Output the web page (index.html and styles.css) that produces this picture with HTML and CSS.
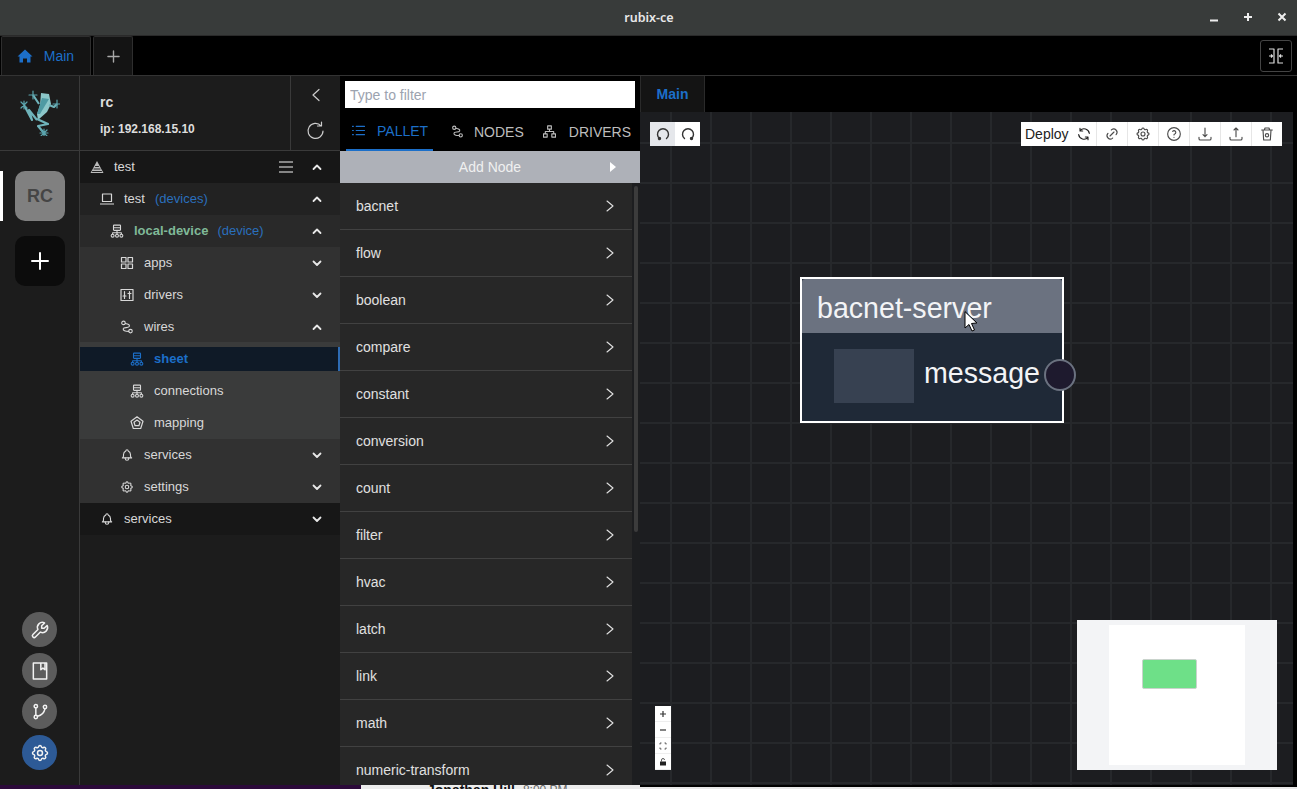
FILE: index.html
```html
<!DOCTYPE html>
<html lang="en">
<head>
    <meta charset="UTF-8">
    <title>rubix-ce</title>
    <link rel="stylesheet" href="styles.css">
</head>

<body>
    <!-- Shared icons -->
    <svg class="icon-defs" xmlns="http://www.w3.org/2000/svg">
        <symbol id="i-hierarchy" viewBox="0 0 24 24"><rect x="6" y="2" width="12" height="9" rx="1"/><path d="M6 6.500h12M12 11v4M4.500 15h15M4.500 15v2M12 15v2M19.500 15v2"/><circle cx="4.500" cy="20" r="2.500"/><circle cx="12" cy="20" r="2.500"/><circle cx="19.500" cy="20" r="2.500"/></symbol>
        <symbol id="i-route" viewBox="0 0 24 24"><circle cx="6" cy="5" r="3"/><circle cx="18" cy="19" r="3"/><path d="M9 6c5 1 8 2 7 5s-10 1 -10.500 4 3 4.500 9.500 4.500"/></symbol>
        <symbol id="i-bell" viewBox="0 0 24 24"><path d="M10 5a2 2 0 1 1 4 0a7 7 0 0 1 4 6v3a4 4 0 0 0 2 3h-16a4 4 0 0 0 2 -3v-3a7 7 0 0 1 4 -6"/><path d="M9 17v1a3 3 0 0 0 6 0v-1"/></symbol>
        <symbol id="i-gear" viewBox="0 0 24 24"><path d="M10.325 4.317c.426 -1.756 2.924 -1.756 3.35 0a1.724 1.724 0 0 0 2.573 1.066c1.543 -.94 3.31 .826 2.37 2.37a1.724 1.724 0 0 0 1.065 2.572c1.756 .426 1.756 2.924 0 3.35a1.724 1.724 0 0 0 -1.066 2.573c.94 1.543 -.826 3.31 -2.37 2.37a1.724 1.724 0 0 0 -2.572 1.065c-.426 1.756 -2.924 1.756 -3.35 0a1.724 1.724 0 0 0 -2.573 -1.066c-1.543 .94 -3.31 -.826 -2.37 -2.37a1.724 1.724 0 0 0 -1.065 -2.572c-1.756 -.426 -1.756 -2.924 0 -3.35a1.724 1.724 0 0 0 1.066 -2.573c-.94 -1.543 .826 -3.31 2.37 -2.37c1 .608 2.296 .07 2.572 -1.065z"/><circle cx="12" cy="12" r="3"/></symbol>
        <symbol id="i-up" viewBox="0 0 12 12"><path d="M2.500 8l3.500 -3.500 3.500 3.500"/></symbol>
        <symbol id="i-down" viewBox="0 0 12 12"><path d="M2.500 4.500l3.500 3.500 3.500 -3.500"/></symbol>
        <symbol id="i-right" viewBox="0 0 12 12"><path d="M3 1l6 5 -6 5"/></symbol>
    </svg>

    <div class="app">
        <header class="titlebar">
            <span class="title">rubix-ce</span>
            <div class="win-controls">
                <svg class="win-icon" viewBox="0 0 10 10"><path d="M1 8.500h8"/></svg>
                <svg class="win-icon" viewBox="0 0 10 10"><path d="M1 5h8M5 1v8"/></svg>
                <svg class="win-icon" viewBox="0 0 10 10"><path d="M1.500 1.500l7 7M8.500 1.500l-7 7"/></svg>
            </div>
        </header>

        <div class="tabbar">
            <div class="tab tab-main">
                <svg class="home" viewBox="0 0 16 16"><path d="M8 1.500l7.500 7h-2v6h-3.500v-4h-4v4h-3.500v-6h-2z"/></svg>
                <span>Main</span>
            </div>
            <div class="tab tab-add">
                <svg class="plus" viewBox="0 0 14 14"><path d="M7 1v12M1 7h12"/></svg>
            </div>
            <div class="layout-toggle">
                <svg viewBox="0 0 18 18"><path d="M2 2h5v14h-5M2 9h3.500M4 7.500l1.500 1.500 -1.500 1.500M16 2h-5v14h5M16 9h-3.500M14 7.500l-1.500 1.500 1.500 1.500"/></svg>
            </div>
        </div>

        <div class="main">
            <!-- Left rail -->
            <nav class="rail">
                <div class="logo">
                    <svg class="frog" viewBox="0 0 40 46" width="40" height="46">
                        <path class="frog-a" d="M21 3l8 1 2 10 -4 8 -9 8 -1 -6 3 -9z"/>
                        <path class="frog-b" d="M22 8l7 1 -9 15 -3 0z"/>
                        <path class="frog-leg" d="M19 14l-6 -9M29 15l5 2 3 -3M17 30l-8 -10 3 10 -8 -15M17 29l11 5 -10 2 6 7"/>
                        <path class="frog-star" d="M13 1v8M9 5h8M1 12l6 6M7 12l-6 6M4 11v8M37 10v8M33 14h7M24 39v8M20 43h8M21 40l6 6M27 40l-6 6"/>
                    </svg>
                </div>
                <div class="rail-item">
                    <span class="rail-mark"></span>
                    <div class="rail-box rail-box-rc">RC</div>
                </div>
                <div class="rail-box rail-box-add">
                    <svg viewBox="0 0 20 20"><path d="M10 2v16M2 10h16"/></svg>
                </div>
                <div class="rail-tools">
                    <button class="round-btn"><svg viewBox="0 0 24 24"><path d="M7 10h3v-3l-3.500 -3.500a6 6 0 0 1 8 8l6 6a2 2 0 0 1 -3 3l-6 -6a6 6 0 0 1 -8 -8l3.500 3.500" transform="matrix(-1 0 0 1 24 0)"/></svg></button>
                    <button class="round-btn"><svg viewBox="0 0 24 24"><path d="M4 2.500h16v19h-16zM13 2.500v8l2.500 -2 2.500 2v-8"/></svg></button>
                    <button class="round-btn"><svg viewBox="0 0 24 24"><circle cx="7" cy="18" r="2"/><circle cx="7" cy="5" r="2"/><circle cx="18" cy="6" r="2"/><path d="M7 7v9M9 17c6 -1 8 -4 9 -9"/></svg></button>
                    <button class="round-btn round-btn-on"><svg viewBox="0 0 24 24"><use href="#i-gear"/></svg></button>
                </div>
            </nav>

            <!-- Device tree -->
            <aside class="side">
                <div class="side-head">
                    <div class="side-info">
                        <div class="side-name">rc</div>
                        <div class="side-ip">ip: 192.168.15.10</div>
                    </div>
                    <div class="side-actions">
                        <svg class="act" viewBox="0 0 14 14"><path d="M10 1.500l-6 5.500 6 5.500"/></svg>
                        <svg class="act act-lg" viewBox="0 0 20 20"><path d="M17 10a7.500 7.500 0 1 1 -2 -5.200M15.500 1v4h-4"/></svg>
                    </div>
                </div>

                <div class="row row-root">
                    <svg class="ico" viewBox="0 0 14 14"><path class="fill" d="M7 1l6.500 12h-13z"/><path class="dark" d="M2.500 11.500h9M4 9h6M5.500 6.500h3"/></svg>
                    <span class="lbl">test</span>
                    <svg class="menu" viewBox="0 0 14 12"><path d="M0 1h14M0 6h14M0 11h14"/></svg>
                    <svg class="chev"><use href="#i-up"/></svg>
                </div>
                <div class="row row-l1">
                    <svg class="ico" viewBox="0 0 14 14"><path d="M2.500 2h9v7.500h-9zM.5 12h13"/></svg>
                    <span class="lbl">test</span><span class="kind">(devices)</span>
                    <svg class="chev"><use href="#i-up"/></svg>
                </div>
                <div class="row row-l2">
                    <svg class="ico ico-s"><use href="#i-hierarchy"/></svg>
                    <span class="lbl lbl-device">local-device</span><span class="kind kind-device">(device)</span>
                    <svg class="chev"><use href="#i-up"/></svg>
                </div>
                <div class="row row-l3">
                    <svg class="ico" viewBox="0 0 14 14"><path d="M1.500 1.500h4.500v4.500h-4.500zM8 1.500h4.500v4.500h-4.500zM1.500 8h4.500v4.500h-4.500zM8 8h4.500v4.500h-4.500z"/></svg>
                    <span class="lbl">apps</span>
                    <svg class="chev"><use href="#i-down"/></svg>
                </div>
                <div class="row row-l3">
                    <svg class="ico" viewBox="0 0 14 14"><path d="M1 1.500h12v11h-12zM4.500 3.500v7M9.500 3.500v7M3 8h3M8 5.500h3"/></svg>
                    <span class="lbl">drivers</span>
                    <svg class="chev"><use href="#i-down"/></svg>
                </div>
                <div class="row row-l3">
                    <svg class="ico ico-s"><use href="#i-route"/></svg>
                    <span class="lbl">wires</span>
                    <svg class="chev"><use href="#i-up"/></svg>
                </div>
                <div class="sub">
                    <div class="row row-l4 row-active">
                        <svg class="ico ico-s"><use href="#i-hierarchy"/></svg>
                        <span class="lbl">sheet</span>
                    </div>
                    <div class="row row-l4">
                        <svg class="ico ico-s"><use href="#i-hierarchy"/></svg>
                        <span class="lbl">connections</span>
                    </div>
                    <div class="row row-l4">
                        <svg class="ico" viewBox="0 0 14 14"><path d="M7 .8l6 4.400 -2.300 7.300h-7.400l-2.300 -7.300z"/><path d="M7 4l3 2.200 -1.100 3.500h-3.800l-1.100 -3.500z"/></svg>
                        <span class="lbl">mapping</span>
                    </div>
                </div>
                <div class="row row-l3">
                    <svg class="ico ico-s"><use href="#i-bell"/></svg>
                    <span class="lbl">services</span>
                    <svg class="chev"><use href="#i-down"/></svg>
                </div>
                <div class="row row-l3">
                    <svg class="ico ico-s"><use href="#i-gear"/></svg>
                    <span class="lbl">settings</span>
                    <svg class="chev"><use href="#i-down"/></svg>
                </div>
                <div class="row row-bottom">
                    <svg class="ico ico-s"><use href="#i-bell"/></svg>
                    <span class="lbl">services</span>
                    <svg class="chev"><use href="#i-down"/></svg>
                </div>
            </aside>

            <!-- Node palette -->
            <section class="palette">
                <div class="filter">
                    <input class="filter-input" type="text" placeholder="Type to filter">
                </div>
                <div class="pal-tabs">
                    <div class="pal-tab pal-tab-on">
                        <svg viewBox="0 0 14 14"><path d="M4.500 2.500h9M4.500 7h9M4.500 11.500h9M.5 2.500h1M.5 7h1M.5 11.500h1"/></svg>
                        <span>PALLET</span>
                    </div>
                    <div class="pal-tab pal-tab-nodes">
                        <svg class="pal-route"><use href="#i-route"/></svg>
                        <span>NODES</span>
                    </div>
                    <div class="pal-tab pal-tab-drivers">
                        <svg viewBox="0 0 14 14"><path d="M5 1h4v3.500h-4zM.5 9.500h4v3.500h-4zM9.500 9.500h4v3.500h-4zM7 4.500v2.500M2.500 9.500v-2.500h9v2.500"/></svg>
                        <span>DRIVERS</span>
                    </div>
                </div>
                <div class="add-node">
                    <span>Add Node</span>
                    <i class="add-arrow"></i>
                </div>
                <div class="pal-body">
                    <ul class="pal-list">
                        <li>bacnet<svg><use href="#i-right"/></svg></li>
                        <li>flow<svg><use href="#i-right"/></svg></li>
                        <li>boolean<svg><use href="#i-right"/></svg></li>
                        <li>compare<svg><use href="#i-right"/></svg></li>
                        <li>constant<svg><use href="#i-right"/></svg></li>
                        <li>conversion<svg><use href="#i-right"/></svg></li>
                        <li>count<svg><use href="#i-right"/></svg></li>
                        <li>filter<svg><use href="#i-right"/></svg></li>
                        <li>hvac<svg><use href="#i-right"/></svg></li>
                        <li>latch<svg><use href="#i-right"/></svg></li>
                        <li>link<svg><use href="#i-right"/></svg></li>
                        <li>math<svg><use href="#i-right"/></svg></li>
                        <li>numeric-transform<svg><use href="#i-right"/></svg></li>
                    </ul>
                    <div class="pal-scroll"><div class="pal-thumb"></div></div>
                </div>
            </section>

            <!-- Wire sheet -->
            <section class="sheet">
                <div class="sheet-tabs">
                    <div class="sheet-tab">Main</div>
                </div>
                <div class="canvas">
                    <div class="history">
                        <button class="hist-btn hist-btn-off"><svg viewBox="0 0 14 14"><path d="M3.500 11.500a5.500 5.500 0 1 1 7 0"/><circle class="hist-dot" cx="3.500" cy="11.500" r="1"/></svg></button>
                        <button class="hist-btn"><svg viewBox="0 0 14 14"><path d="M10.500 11.500a5.500 5.500 0 1 0 -7 0"/><circle class="hist-dot" cx="10.500" cy="11.500" r="1"/></svg></button>
                    </div>
                    <div class="toolbar">
                        <div class="tool tool-deploy">
                            <span>Deploy</span>
                            <svg viewBox="0 0 24 24"><path d="M20 11a8 8 0 0 0 -14 -4M4 13a8 8 0 0 0 14 4M6 3.500v4h4M18 20.500v-4h-4"/></svg>
                        </div>
                        <div class="tool"><svg viewBox="0 0 24 24"><path d="M9 15l6 -6M11 6l.5 -.5a5 5 0 0 1 7 7l-.5 .5M13 18l-.4 .5a5 5 0 0 1 -7 -7l.4 -.5"/></svg></div>
                        <div class="tool"><svg viewBox="0 0 24 24"><use href="#i-gear"/></svg></div>
                        <div class="tool"><svg viewBox="0 0 24 24"><circle cx="12" cy="12" r="9.500"/><path d="M12 17v.01M12 13.500a1.500 1.500 0 0 1 1 -1.500a2.600 2.600 0 1 0 -3 -4"/></svg></div>
                        <div class="tool"><svg viewBox="0 0 24 24"><path d="M3 17v2a2 2 0 0 0 2 2h14a2 2 0 0 0 2 -2v-2M12 3v13M9 13l3 3 3 -3"/></svg></div>
                        <div class="tool"><svg viewBox="0 0 24 24"><path d="M3 17v2a2 2 0 0 0 2 2h14a2 2 0 0 0 2 -2v-2M12 16v-13M9 6l3 -3 3 3"/></svg></div>
                        <div class="tool"><svg viewBox="0 0 24 24"><path d="M4 6h16M6 6l1 15h10l1 -15M8 6l1 -3h6l1 3"/><circle cx="12" cy="14" r="2.500"/></svg></div>
                    </div>

                    <div class="node">
                        <div class="node-head">bacnet-server</div>
                        <div class="node-body">
                            <div class="node-value"></div>
                            <span class="node-port">message</span>
                        </div>
                    </div>
                    <div class="handle"></div>
                    <svg class="pointer" viewBox="0 0 14 22"><path d="M1 1v16l4 -3.500 3 6.500 2.500 -1 -3 -6.500 5 -.5z"/></svg>

                    <div class="zoom-ctl">
                        <button><svg viewBox="0 0 8 8"><path d="M4 1v6M1 4h6"/></svg></button>
                        <button><svg viewBox="0 0 8 8"><path d="M1 4h6"/></svg></button>
                        <button><svg class="thin" viewBox="0 0 8 8"><path d="M1 2.500v-1.500h1.500M5.500 1h1.500v1.500M7 5.500v1.500h-1.500M2.500 7h-1.500v-1.500"/></svg></button>
                        <button><svg viewBox="0 0 8 8"><path class="solid" d="M1 3.500h6v4h-6z"/><path class="thin" d="M2.500 3.500v-1.500a1.500 1.500 0 0 1 3 0"/></svg></button>
                    </div>

                    <div class="minimap">
                        <div class="mini-view">
                            <div class="mini-node"></div>
                        </div>
                    </div>
                </div>
            </section>
        </div>

        <!-- Page showing through below the window -->
        <div class="behind">
            <div class="behind-dark"></div>
            <div class="behind-light">
                <b>Jonathan Hill</b><span>8:00 PM</span>
            </div>
            <div class="behind-edge"></div>
        </div>
    </div>
</body>
</html>
```

FILE: styles.css
```css
/* Styles */
* {
    box-sizing: border-box;
}

html, body {
    margin: 0;
    padding: 0;
    height: 100%;
    overflow: hidden;
    background-color: #000;
}

body {
    font-family: "Liberation Sans", Arial, sans-serif;
    font-size: 13px;
    color: #ddd;
}

svg {
    fill: none;
    stroke: currentColor;
    stroke-width: 1.5;
    stroke-linecap: round;
    stroke-linejoin: round;
    flex: none;
}

button {
    border: 0;
    padding: 0;
    background: none;
}

.icon-defs {
    display: none;
}

.app {
    display: flex;
    flex-direction: column;
    width: 1297px;
    height: 789px;
    overflow: hidden;
}

/* Title bar */
.titlebar {
    position: relative;
    flex: none;
    display: flex;
    align-items: center;
    justify-content: center;
    height: 36px;
    background-color: #383b3a;
    border-bottom: 1px solid #2a2a2a;
}

.title {
    font-family: "Noto Sans", sans-serif;
    font-size: 12.500px;
    font-weight: 600;
    color: #e8e8e8;
    margin-right: -1px;
}

.win-controls {
    position: absolute;
    right: 10px;
    top: 12px;
    display: flex;
    gap: 24px;
}

.win-icon {
    width: 10px;
    height: 10px;
    color: #eee;
    stroke-width: 2;
    stroke-linecap: butt;
}

/* Tab bar */
.tabbar {
    flex: none;
    display: flex;
    align-items: flex-end;
    height: 40px;
    background-color: #000;
    border-bottom: 1px solid #333;
    padding-left: 1px;
    position: relative;
}

.tab {
    display: flex;
    align-items: center;
    justify-content: center;
    height: 39px;
    background-color: #141414;
    border: 1px solid #2e2e2e;
    border-bottom: 0;
    border-radius: 2px 2px 0 0;
}

.tab-main {
    width: 90px;
    gap: 11px;
    font-size: 14px;
    color: #1c6fc9;
    padding-right: 1px;
}

.home {
    width: 16px;
    height: 16px;
    fill: #1c6fc9;
    stroke: none;
}

.tab-add {
    width: 40px;
    margin-left: 2px;
}

.plus {
    width: 13px;
    height: 13px;
    color: #a8a8a8;
}

.layout-toggle {
    position: absolute;
    left: 1260px;
    top: 4px;
    display: flex;
    align-items: center;
    justify-content: center;
    width: 32px;
    height: 32px;
    border: 1px solid #444;
    border-radius: 3px;
}

.layout-toggle svg {
    width: 18px;
    height: 18px;
    color: #ddd;
    stroke-width: 1.200;
    stroke-linecap: butt;
}

/* Main columns */
.main {
    flex: none;
    display: flex;
    height: 709px;
}

/* Rail */
.rail {
    flex: none;
    display: flex;
    flex-direction: column;
    width: 80px;
    background-color: #1c1c1c;
    border-right: 1px solid #3a3a3a;
}

.logo {
    display: flex;
    align-items: center;
    justify-content: center;
    height: 75px;
    border-bottom: 1px solid #3a3a3a;
}

.frog-a {
    fill: #8cc7c9;
    stroke: none;
}

.frog-b {
    fill: #4f9aa3;
    stroke: none;
}

.frog-leg {
    color: #6fb3ba;
    stroke-width: 2.200;
    stroke-linecap: butt;
}

.frog-star {
    color: #5aa4ad;
    stroke-width: 1.200;
}

.rail-item {
    position: relative;
    margin-top: 20px;
}

.rail-mark {
    position: absolute;
    left: 0;
    top: 0;
    width: 3px;
    height: 50px;
    background-color: #fff;
}

.rail-box {
    display: flex;
    align-items: center;
    justify-content: center;
    width: 50px;
    height: 50px;
    margin-left: 15px;
    border-radius: 10px;
}

.rail-box-rc {
    background-color: #808080;
    color: #454545;
    font-size: 18px;
    font-weight: bold;
}

.rail-box-add {
    margin-top: 15px;
    background-color: #0c0c0c;
    color: #fff;
}

.rail-box-add svg {
    width: 20px;
    height: 20px;
    stroke-width: 2;
}

.rail-tools {
    display: flex;
    flex-direction: column;
    gap: 6px;
    margin-top: auto;
    padding: 0 0 15px 22px;
}

.round-btn {
    display: flex;
    align-items: center;
    justify-content: center;
    width: 35px;
    height: 35px;
    border-radius: 50%;
    background-color: #5c5c5c;
    color: #f2f2f2;
}

.round-btn svg {
    width: 20px;
    height: 20px;
    stroke-width: 1.800;
}

.round-btn-on {
    background-color: #2d5a96;
}

/* Side tree */
.side {
    flex: none;
    width: 260px;
    background-color: #1c1c1c;
}

.side-head {
    display: flex;
    height: 75px;
    border-bottom: 1px solid #3a3a3a;
}

.side-info {
    flex: 1;
    padding: 18px 0 0 20px;
}

.side-name {
    font-size: 14px;
    font-weight: bold;
    line-height: 16px;
}

.side-ip {
    margin-top: 12px;
    font-size: 12px;
    font-weight: bold;
    line-height: 14px;
}

.side-actions {
    display: flex;
    flex-direction: column;
    align-items: center;
    gap: 19px;
    width: 50px;
    padding-top: 12px;
    border-left: 1px solid #3a3a3a;
}

.act {
    width: 14px;
    height: 14px;
    color: #ccc;
    stroke-width: 1.200;
}

.act-lg {
    width: 20px;
    height: 20px;
}

.row {
    display: flex;
    align-items: center;
    height: 32px;
    padding-right: 17px;
    color: #d8d8d8;
}

.row-root {
    background-color: #171717;
    padding-left: 10px;
}

.row-bottom {
    background-color: #171717;
    padding-left: 20px;
}

.row-l1 {
    background-color: #222;
    padding-left: 20px;
}

.row-l2 {
    background-color: #292929;
    padding-left: 30px;
}

.row-l3 {
    background-color: #313131;
    padding-left: 40px;
}

.sub {
    background-color: #3a3b3b;
    padding-top: 1px;
    margin-top: -1px;
}

.row-l4 {
    padding-left: 50px;
}

.row-active {
    height: 24px;
    margin: 4px 0;
    background-color: #0f1a27;
    border-right: 2px solid #2e6cb4;
    color: #1c6fc9;
    font-weight: bold;
    padding-right: 14px;
}

.ico {
    width: 14px;
    height: 14px;
    margin-right: 10px;
    stroke-width: 1.200;
}

.ico-s {
    stroke-width: 1.900;
}

.ico .fill {
    fill: #bbb;
    stroke: none;
}

.ico .dark {
    stroke: #222;
    stroke-width: 1;
}

.lbl {
    line-height: 16px;
}

.row-root .lbl {
    flex: 1;
}

.lbl-device {
    color: #80b998;
    font-weight: bold;
}

.kind {
    margin: -1px 0 0 10px;
    color: #2a6fbd;
}

.kind-device {
    margin-left: 9px;
}

.menu {
    width: 14px;
    height: 12px;
    margin-right: 18px;
    color: #aaa;
    stroke-width: 1.500;
    stroke-linecap: butt;
}

.chev {
    width: 12px;
    height: 12px;
    margin-left: auto;
    color: #e8e8e8;
    stroke-width: 1.800;
}

.row-root .chev {
    margin-left: 0;
}

/* Palette */
.palette {
    flex: none;
    display: flex;
    flex-direction: column;
    width: 300px;
    background-color: #000;
}

.filter {
    flex: none;
    height: 32px;
    padding: 5px 5px 0;
}

.filter-input {
    display: block;
    width: 100%;
    height: 27px;
    padding: 0 5px;
    border: 0;
    background-color: #fff;
    font-family: "Liberation Sans", Arial, sans-serif;
    font-size: 14px;
    color: #333;
}

.filter-input::placeholder {
    color: #9ca3af;
}

.pal-tabs {
    flex: none;
    display: flex;
    height: 43px;
    padding-left: 6px;
    font-size: 14px;
    color: #bdbdbd;
}

.pal-tab {
    flex: none;
    display: flex;
    align-items: center;
    height: 43px;
    padding: 4px 0 0 6px;
}

.pal-tab svg {
    width: 13px;
    height: 13px;
    stroke-width: 1.200;
}

.pal-tab .pal-route {
    stroke-width: 2;
}

.pal-tab-on {
    width: 87px;
    gap: 12px;
    margin-right: 12px;
    color: #1c6fc9;
    border-bottom: 2px solid #1c6fc9;
}

.pal-tab-nodes {
    gap: 10px;
    margin-right: 13px;
}

.pal-tab-drivers {
    gap: 13px;
}

.add-node {
    flex: none;
    position: relative;
    display: flex;
    align-items: center;
    justify-content: center;
    height: 32px;
    background-color: #aeb1b8;
    font-size: 14px;
    color: #f0f0f0;
}

.add-arrow {
    position: absolute;
    left: 270px;
    top: 11px;
    border-left: 6px solid #fff;
    border-top: 5px solid transparent;
    border-bottom: 5px solid transparent;
}

.pal-body {
    flex: 1;
    display: flex;
    min-height: 0;
    overflow: hidden;
}

.pal-list {
    flex: none;
    width: 292px;
    margin: 0;
    padding: 0;
    list-style: none;
    background-color: #272727;
}

.pal-list li {
    display: flex;
    align-items: center;
    justify-content: space-between;
    height: 47px;
    padding: 0 16px;
    border-bottom: 1px solid #414141;
    font-size: 14px;
    color: #e0e0e0;
}

.pal-list svg {
    width: 12px;
    height: 12px;
    color: #e0e0e0;
    stroke-width: 1.100;
}

.pal-scroll {
    flex: 1;
    padding: 3px 2px 0;
    background-color: #1d1e20;
}

.pal-thumb {
    width: 4px;
    height: 346px;
    background-color: #3c3c3c;
    border-radius: 2px;
}

/* Wire sheet */
.sheet {
    flex: none;
    display: flex;
    flex-direction: column;
    width: 657px;
    background-color: #000;
    padding-right: 4px;
}

.sheet-tabs {
    flex: none;
    height: 36px;
}

.sheet-tab {
    width: 65px;
    height: 36px;
    line-height: 36px;
    text-align: center;
    font-size: 14px;
    font-weight: bold;
    color: #1c6fc9;
    background-color: #141414;
    border-left: 1px solid #2a2a2a;
    border-right: 1px solid #2a2a2a;
}

.canvas {
    position: relative;
    flex: 1;
    background-color: #1c1d20;
    background-image:
        linear-gradient(#26282b 2px, transparent 2px),
        linear-gradient(90deg, #26282b 2px, transparent 2px);
    background-size: 40px 40px;
    background-position: 0 30px, 30px 0;
    overflow: hidden;
}

.history {
    position: absolute;
    left: 10px;
    top: 10px;
    display: flex;
    height: 24px;
}

.hist-btn {
    display: flex;
    align-items: center;
    justify-content: center;
    width: 25px;
    height: 24px;
    background-color: #fff;
    color: #333;
}

.hist-btn-off {
    background-color: #e5e7eb;
}

.hist-btn svg {
    width: 14px;
    height: 14px;
    stroke-width: 1.400;
}

.hist-dot {
    fill: #333;
}

.toolbar {
    position: absolute;
    left: 381px;
    top: 10px;
    display: flex;
    height: 24px;
    background-color: #fff;
    color: #4b4b4b;
}

.tool {
    display: flex;
    align-items: center;
    justify-content: center;
    width: 31px;
    border-left: 1px solid #e6e6e6;
}

.tool svg {
    width: 16px;
    height: 16px;
    stroke-width: 1.700;
}

.tool-deploy {
    width: 75px;
    justify-content: flex-start;
    gap: 7px;
    padding-left: 4px;
    border-left: 0;
    font-size: 14px;
    color: #222;
}

.node {
    position: absolute;
    left: 160px;
    top: 165px;
    display: flex;
    flex-direction: column;
    width: 264px;
    height: 146px;
    border: 2px solid #fff;
    background-color: #1f2937;
}

.node-head {
    height: 54px;
    padding-left: 15px;
    line-height: 59px;
    font-size: 28.600px;
    color: #f3f4f6;
    background-color: #6b7280;
    border-radius: 3px 3px 0 0;
}

.node-body {
    display: flex;
    padding: 16px 0 0 32px;
}

.node-value {
    width: 80px;
    height: 54px;
    background-color: #374151;
}

.node-port {
    margin: 4px 0 0 10px;
    font-size: 28.600px;
    line-height: 40px;
    color: #f3f4f6;
}

.handle {
    position: absolute;
    left: 404px;
    top: 247px;
    width: 32px;
    height: 32px;
    border: 2px solid #6b7280;
    border-radius: 50%;
    background-color: #1e1a2e;
}

.pointer {
    position: absolute;
    left: 324px;
    top: 199px;
    width: 14px;
    height: 22px;
    fill: #fff;
    stroke: #000;
    stroke-width: 1;
}

.zoom-ctl {
    position: absolute;
    left: 15px;
    top: 594px;
    display: flex;
    flex-direction: column;
    width: 16px;
    background-color: #fff;
}

.zoom-ctl button {
    display: flex;
    align-items: center;
    justify-content: center;
    height: 16px;
    border-bottom: 1px solid #eee;
    color: #333;
}

.zoom-ctl svg {
    width: 8px;
    height: 8px;
    stroke-width: 1.200;
    stroke-linecap: butt;
}

.zoom-ctl .thin {
    stroke-width: .800;
}

.zoom-ctl .solid {
    fill: #222;
    stroke: none;
}

.minimap {
    position: absolute;
    left: 437px;
    top: 508px;
    width: 200px;
    height: 150px;
    padding: 5px 32px;
    background-color: #f3f4f6;
}

.mini-view {
    width: 136px;
    height: 140px;
    padding: 34px 0 0 33px;
    background-color: #fff;
}

.mini-node {
    width: 55px;
    height: 30px;
    background-color: #6ee088;
    border: 1px solid #c9d3cc;
    border-radius: 2px;
}

/* Below the window */
.behind {
    flex: none;
    display: flex;
    height: 4px;
    overflow: hidden;
}

.behind-dark {
    width: 361px;
    background-color: #2c0a3a;
}

.behind-light {
    display: flex;
    gap: 8px;
    width: 279px;
    padding-left: 66px;
    background-color: #ececec;
    font-size: 14px;
    line-height: 16px;
    color: #111;
    white-space: nowrap;
}

.behind-light b {
    margin-top: -3px;
}

.behind-light span {
    margin-top: -3px;
    font-size: 12px;
    color: #666;
}

.behind-edge {
    flex: 1;
    background-color: #e8e8e8;
    border-top: 2px solid #000;
}
```
